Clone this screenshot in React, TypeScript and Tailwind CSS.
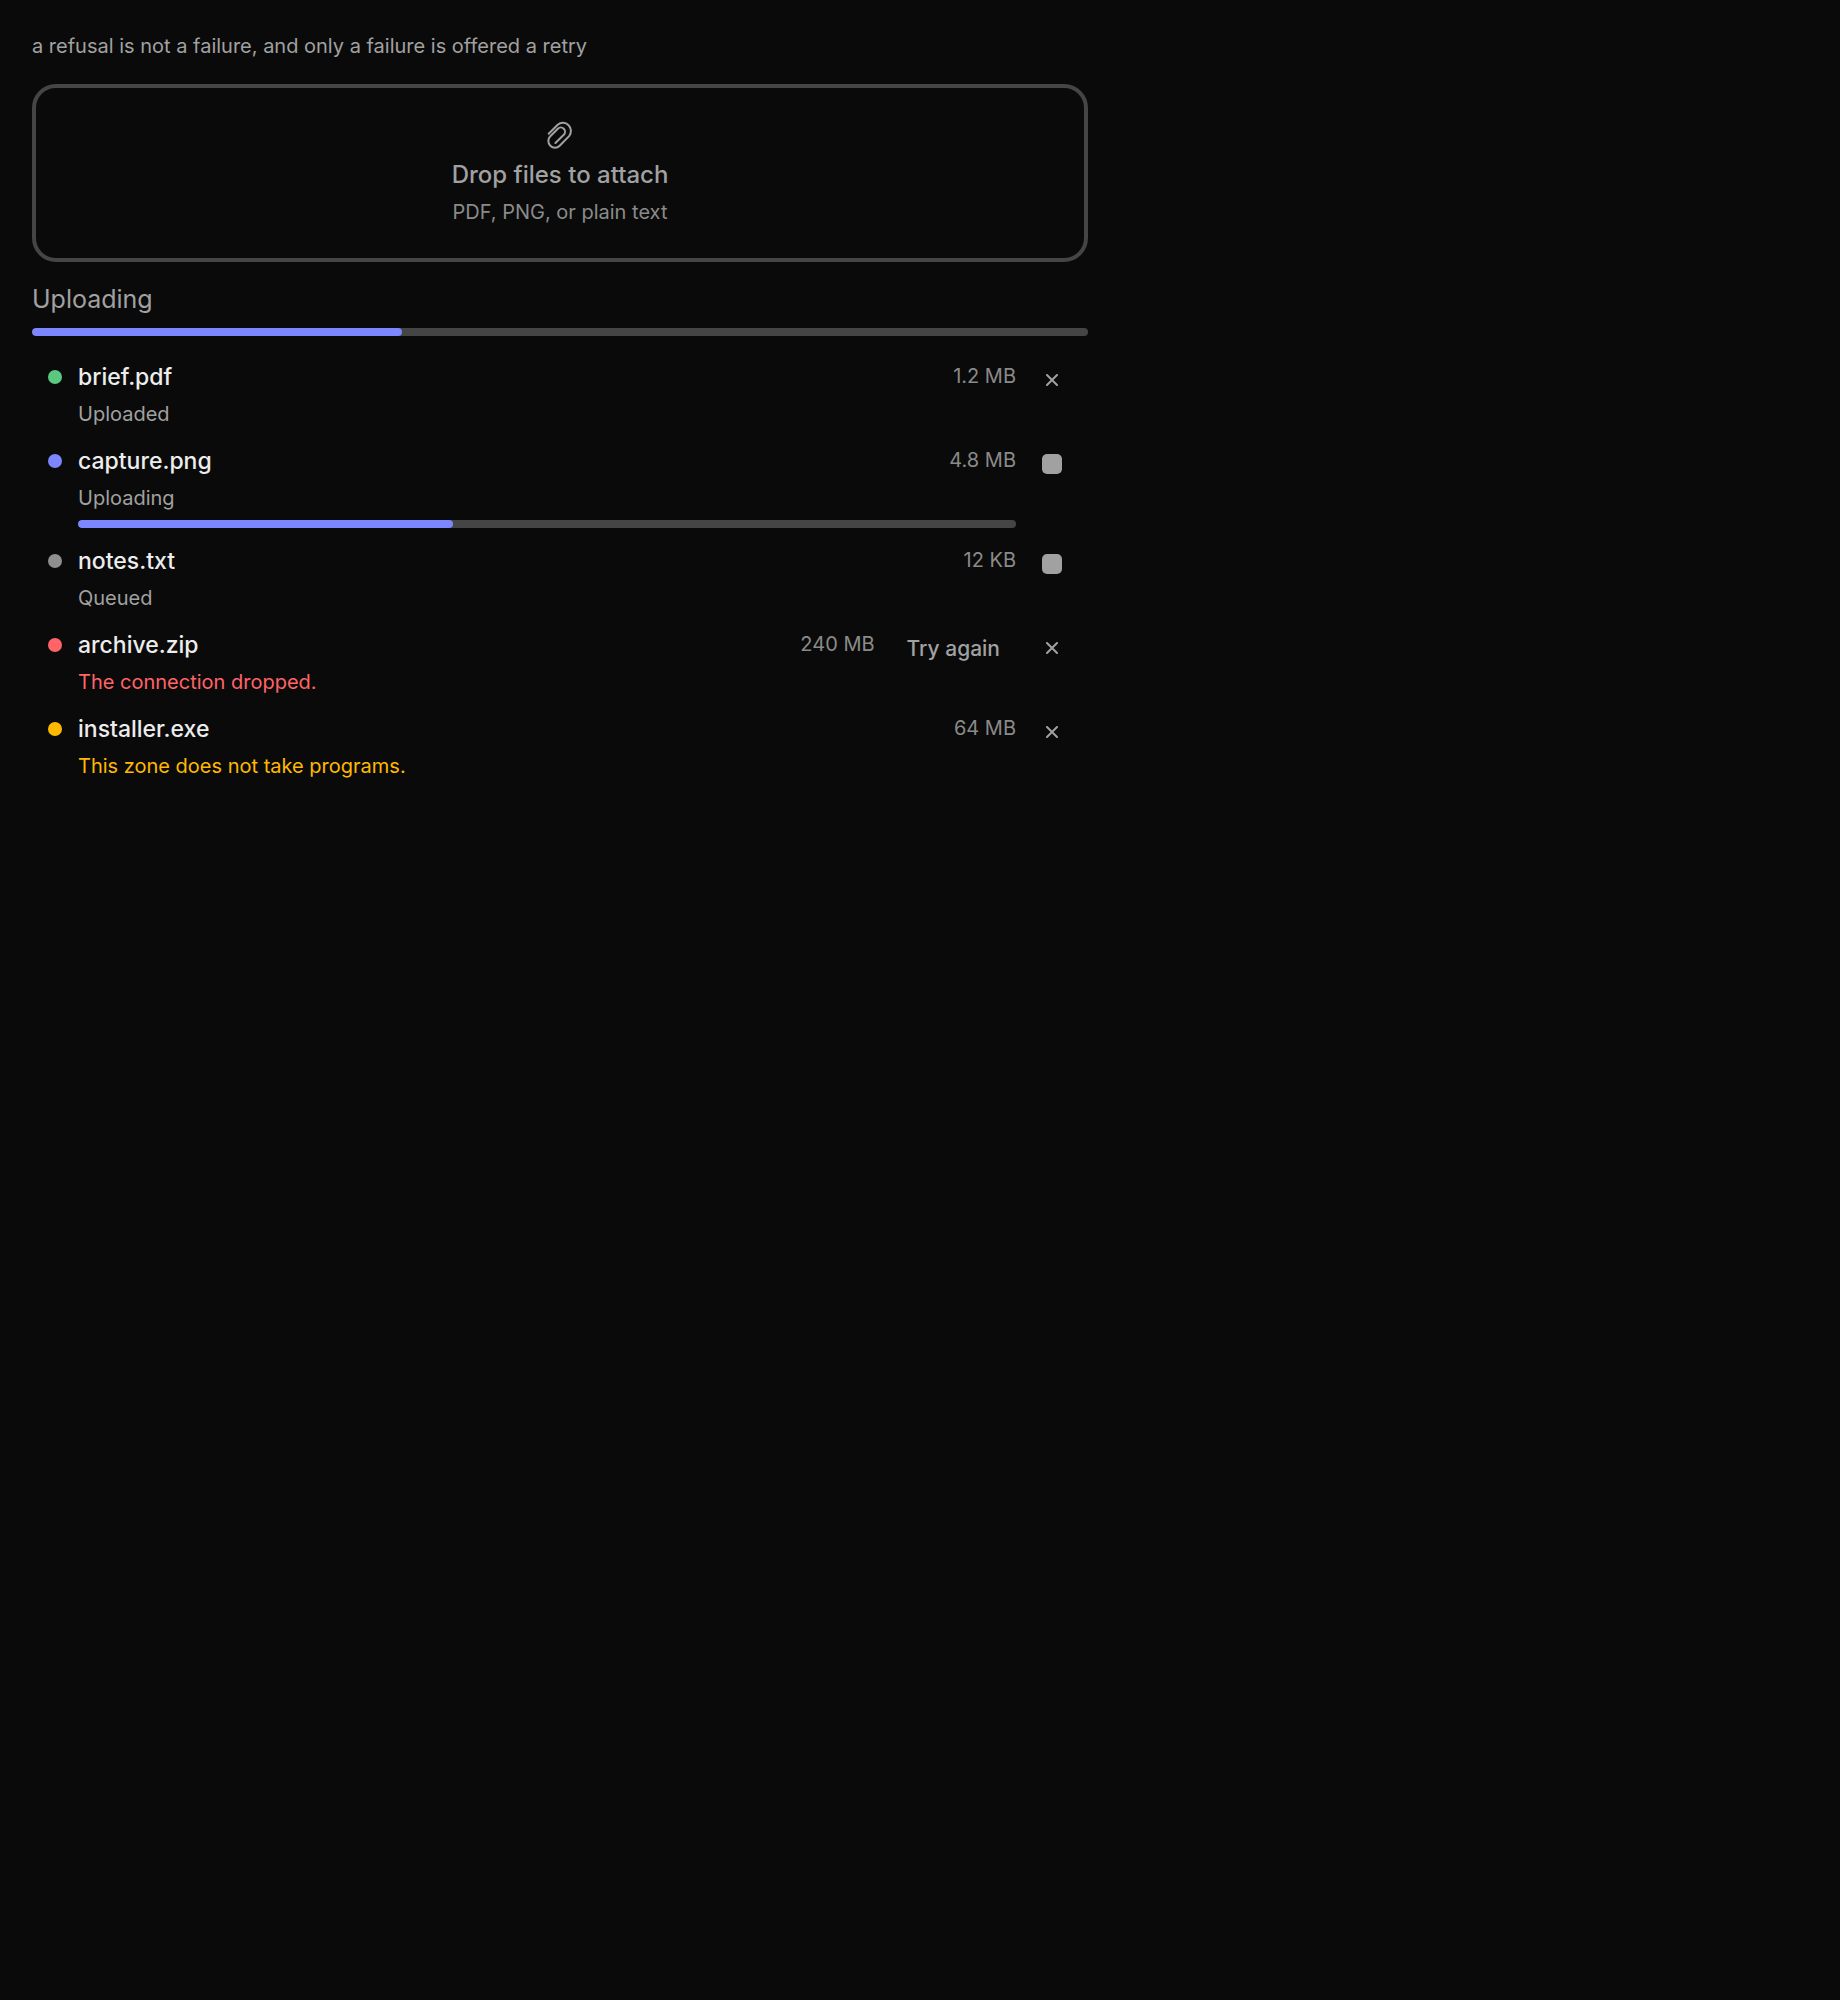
import clsx from 'clsx';

type UploadState = 'done' | 'uploading' | 'queued' | 'failed' | 'refused';

interface UploadItem {
  name: string;
  size: string;
  state: UploadState;
  message: string;
  progress?: number;
}

const UPLOADS: UploadItem[] = [
  { name: 'brief.pdf', size: '1.2 MB', state: 'done', message: 'Uploaded' },
  { name: 'capture.png', size: '4.8 MB', state: 'uploading', message: 'Uploading', progress: 40 },
  { name: 'notes.txt', size: '12 KB', state: 'queued', message: 'Queued' },
  { name: 'archive.zip', size: '240 MB', state: 'failed', message: 'The connection dropped.' },
  { name: 'installer.exe', size: '64 MB', state: 'refused', message: 'This zone does not take programs.' },
];

const DOT_COLORS: Record<UploadState, string> = {
  done: 'bg-[#5bc880]',
  uploading: 'bg-[#7c86ff]',
  queued: 'bg-[#8f8f8f]',
  failed: 'bg-[#ff6467]',
  refused: 'bg-[#ffb900]',
};

const MESSAGE_COLORS: Record<UploadState, string> = {
  done: 'text-[#a1a1a1]',
  uploading: 'text-[#a1a1a1]',
  queued: 'text-[#a1a1a1]',
  failed: 'text-[#ff6467]',
  refused: 'text-[#ffb900]',
};

function PaperclipIcon() {
  return (
    <svg
      viewBox="0 0 30 30"
      className="h-[30px] w-[30px]"
      fill="none"
      stroke="currentColor"
      strokeWidth="2"
      strokeLinecap="round"
      strokeLinejoin="round"
      aria-hidden="true"
    >
      <path d="M3.7 13.7 12.7 4.7A8.1 8.1 0 0 1 24.1 16.1L14.7 25.7A6.6 6.6 0 0 1 5.3 16.3L12.8 8.8A4.2 4.2 0 0 1 18.8 14.8L10.4 23" />
    </svg>
  );
}

function CrossIcon() {
  return (
    <svg
      viewBox="0 0 12 12"
      className="h-3 w-3"
      fill="none"
      stroke="currentColor"
      strokeWidth="2"
      strokeLinecap="round"
      aria-hidden="true"
    >
      <path d="M1 1 11 11M11 1 1 11" />
    </svg>
  );
}

interface ProgressBarProps {
  label: string;
  value: number;
}

function ProgressBar({ label, value }: ProgressBarProps) {
  return (
    <div
      role="progressbar"
      aria-label={label}
      aria-valuenow={value}
      aria-valuemin={0}
      aria-valuemax={100}
      className="h-2 w-full overflow-hidden rounded bg-[#454545]"
    >
      <div className="h-full rounded bg-[#7c86ff]" style={{ width: `${value}%` }} />
    </div>
  );
}

function Dropzone() {
  return (
    <label
      htmlFor="files"
      className="flex cursor-pointer flex-col items-center rounded-3xl border-4 border-[#454545] pt-8 pb-[30px] text-[#a1a1a1]"
    >
      <PaperclipIcon />
      <span className="mt-2 text-[24px] leading-[34px] font-medium">Drop files to attach</span>
      <span className="mt-1 text-[20px] leading-[32px] text-[#8a8a8a]">PDF, PNG, or plain text</span>
      <input id="files" type="file" multiple accept=".pdf,.png,.txt" className="hidden" />
    </label>
  );
}

function UploadRow({ item }: { item: UploadItem }) {
  const isPending = item.state === 'uploading' || item.state === 'queued';

  return (
    <li className="flex items-start gap-4 px-4 py-2">
      <span className={clsx('mt-[10px] h-[14px] w-[14px] shrink-0 rounded-full', DOT_COLORS[item.state])} />
      <div className="min-w-0 flex-1">
        <div className="flex items-start gap-4">
          <div className="min-w-0 flex-1">
            <p className="truncate text-[23px] leading-[34px] font-medium text-[#ededed]">{item.name}</p>
            <p className={clsx('pt-1.5 text-[20px] leading-[28px]', MESSAGE_COLORS[item.state])}>
              {item.message}
            </p>
          </div>
          <span className="text-[20px] leading-[32px] text-[#8a8a8a]">{item.size}</span>
          {item.state === 'failed' && (
            <button type="button" className="px-4 text-[21px] leading-[42px] font-medium text-[#a1a1a1]">
              Try again
            </button>
          )}
        </div>
        {item.progress !== undefined && (
          <div className="mt-2">
            <ProgressBar label={item.name} value={item.progress} />
          </div>
        )}
      </div>
      <button
        type="button"
        aria-label={isPending ? `Cancel ${item.name}` : `Remove ${item.name}`}
        className="flex h-10 w-10 shrink-0 items-center justify-center text-[#a1a1a1]"
      >
        {isPending ? <span className="h-5 w-5 rounded-[5px] bg-[#a1a1a1]" /> : <CrossIcon />}
      </button>
    </li>
  );
}

export default function App() {
  return (
    <main className="min-h-screen bg-[#0a0a0a] p-8 font-['Inter',sans-serif]">
      <div className="max-w-[1056px]">
        <p className="mb-6 text-[20px] leading-[28px] text-[#a1a1a1]">
          a refusal is not a failure, and only a failure is offered a retry
        </p>
        <Dropzone />
        <p className="mt-4 mb-2 text-[25px] leading-[42px] text-[#a1a1a1]">Uploading</p>
        <ProgressBar label="Uploading" value={35} />
        <ul className="mt-4">
          {UPLOADS.map((item) => (
            <UploadRow key={item.name} item={item} />
          ))}
        </ul>
      </div>
    </main>
  );
}
